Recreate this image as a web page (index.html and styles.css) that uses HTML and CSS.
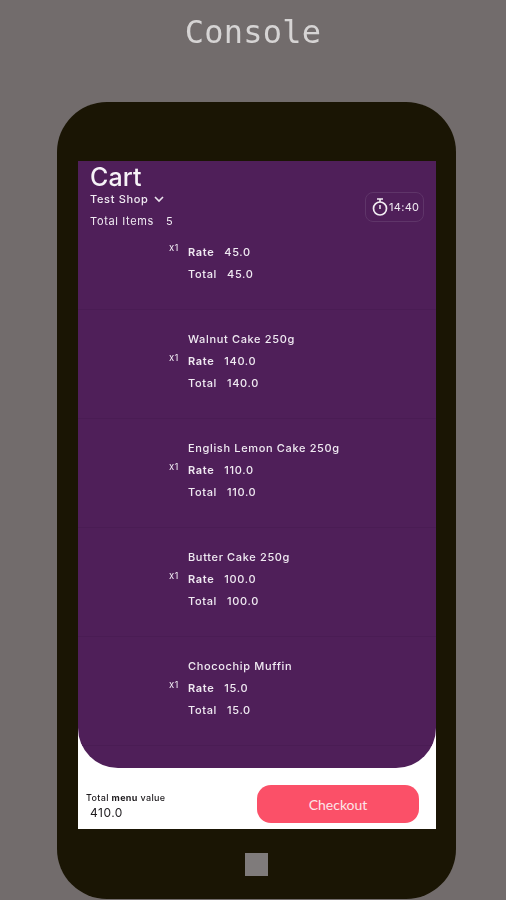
FILE: index.html
```html
<!DOCTYPE html>
<html>

<head>
    <meta name="viewport" content="width=device-width, initial-scale=1.0">
    <link rel="stylesheet" href="styles.css">
</head>

<body>
    <h1 class="console-title">Console</h1>

    <div class="phone">
        <div class="screen">
            <div class="cart">
                <div class="cart-head">
                    <div class="cart-info">
                        <h2>Cart</h2>
                        <div class="shop">
                            Test Shop
                            <svg width="12" height="8" viewBox="0 0 12 8">
                                <path d="M2 2l4 4 4-4" fill="none" stroke="#ebe4ee" stroke-width="1.6" />
                            </svg>
                        </div>
                        <div class="count"><span>Total Items</span><span>5</span></div>
                    </div>
                    <div class="timer">
                        <svg width="18" height="20" viewBox="0 0 18 20">
                            <path d="M6 2h6M9 2v3" fill="none" stroke="#f2edf3" stroke-width="1.6" />
                            <circle cx="9" cy="11.5" r="6.5" fill="none" stroke="#f2edf3" stroke-width="1.7" />
                            <path d="M9 8v4" fill="none" stroke="#f2edf3" stroke-width="1.5" />
                        </svg>
                        14:40
                    </div>
                </div>

                <div class="item first">
                    <div class="qty">x1</div>
                    <div class="details">
                        <div class="line"><span class="rate">Rate</span><span>45.0</span></div>
                        <div class="line"><span class="total">Total</span><span>45.0</span></div>
                    </div>
                </div>

                <div class="item">
                    <div class="qty">x1</div>
                    <div class="details">
                        <div class="line">Walnut Cake 250g</div>
                        <div class="line"><span class="rate">Rate</span><span>140.0</span></div>
                        <div class="line"><span class="total">Total</span><span>140.0</span></div>
                    </div>
                </div>

                <div class="item">
                    <div class="qty">x1</div>
                    <div class="details">
                        <div class="line">English Lemon Cake 250g</div>
                        <div class="line"><span class="rate">Rate</span><span>110.0</span></div>
                        <div class="line"><span class="total">Total</span><span>110.0</span></div>
                    </div>
                </div>

                <div class="item">
                    <div class="qty">x1</div>
                    <div class="details">
                        <div class="line">Butter Cake 250g</div>
                        <div class="line"><span class="rate">Rate</span><span>100.0</span></div>
                        <div class="line"><span class="total">Total</span><span>100.0</span></div>
                    </div>
                </div>

                <div class="item">
                    <div class="qty">x1</div>
                    <div class="details">
                        <div class="line">Chocochip Muffin</div>
                        <div class="line"><span class="rate">Rate</span><span>15.0</span></div>
                        <div class="line"><span class="total">Total</span><span>15.0</span></div>
                    </div>
                </div>
            </div>

            <div class="footer">
                <div class="summary">
                    <div class="summary-label">Total <b>menu</b> value</div>
                    <div class="summary-value">410.0</div>
                </div>
                <button class="checkout">Checkout</button>
            </div>
        </div>
        <div class="home-button"></div>
    </div>
</body>

</html>
```

FILE: styles.css
```css
* {
    box-sizing: border-box;
}

body {
    margin: 0;
    height: 900px;
    overflow: hidden;
    background-color: #726c6c;
    font-family: "Inter", "Liberation Sans", sans-serif;
}

.console-title {
    margin: 0;
    height: 102px;
    padding-top: 12px;
    text-align: center;
    font-family: "DejaVu Sans Mono", monospace;
    font-size: 32px;
    line-height: 40px;
    font-weight: normal;
    letter-spacing: 0.2px;
    color: #d6d4d4;
    filter: blur(0.4px);
}

.phone {
    width: 399px;
    height: 797px;
    margin-left: 57px;
    padding: 59px 20px 0 21px;
    background-color: #1a1504;
    border-radius: 50px;
}

.screen {
    height: 668px;
    display: flex;
    flex-direction: column;
    background-color: white;
}

.cart {
    height: 607px;
    background-color: #4f1f59;
    border-radius: 0 0 40px 40px;
    color: #f0eaf2;
    font-size: 11px;
    letter-spacing: 0.65px;
    overflow: hidden;
}

.cart-head {
    height: 72px;
    display: flex;
    justify-content: space-between;
    padding: 0 12px;
    filter: blur(0.4px);
}

.cart-info h2 {
    margin: 0;
    font-size: 25px;
    line-height: 32px;
    font-weight: 500;
    letter-spacing: 0.1px;
    color: #f6f2f7;
}

.shop {
    display: flex;
    align-items: center;
    gap: 5px;
    height: 12px;
    font-weight: 500;
}

.count {
    display: flex;
    gap: 12px;
    margin-top: 10px;
    line-height: 12px;
}

.timer {
    display: flex;
    align-items: center;
    gap: 0;
    width: 59px;
    height: 30px;
    margin-top: 31px;
    padding-left: 5px;
    border: 1px solid #5f3569;
    border-radius: 8px;
    letter-spacing: 0.3px;
}

.item {
    height: 109px;
    display: flex;
    align-items: center;
    gap: 8px;
    padding-left: 91px;
    border-bottom: 1px solid #4a1c54;
}

.item.first {
    height: 77px;
    align-items: flex-start;
}

.qty {
    width: 11px;
    font-size: 9.5px;
    letter-spacing: 0.2px;
    line-height: 12px;
    margin-top: -13px;
    filter: blur(0.4px);
}

.item.first .qty {
    margin-top: 9px;
}

.details {
    display: flex;
    flex-direction: column;
    gap: 10px;
    margin-top: -6px;
    font-weight: 500;
    filter: blur(0.4px);
}

.item.first .details {
    margin-top: 13px;
}

.line {
    display: flex;
    gap: 10px;
    line-height: 12px;
}

.rate {
    font-weight: 600;
}

.total {
    font-weight: 500;
}

.footer {
    flex: 1;
    display: flex;
    justify-content: space-between;
    align-items: flex-start;
    padding: 17px 17px 0 8px;
}

.summary {
    padding-top: 7px;
    color: #1d1a1d;
    filter: blur(0.3px);
}

.summary-label {
    font-size: 9px;
    line-height: 12px;
    font-weight: 500;
    letter-spacing: 0.35px;
}

.summary-value {
    margin-top: 2px;
    padding-left: 4px;
    font-size: 12px;
    line-height: 14px;
    letter-spacing: 0.5px;
}

.checkout {
    width: 162px;
    height: 38px;
    border: none;
    border-radius: 14px;
    background-color: #fb5068;
    color: #fbe6e9;
    font-family: "Lato", sans-serif;
    font-size: 14px;
}

.home-button {
    width: 23px;
    height: 23px;
    margin: 24px 0 0 167px;
    background-color: #7f7b7b;
}
```
